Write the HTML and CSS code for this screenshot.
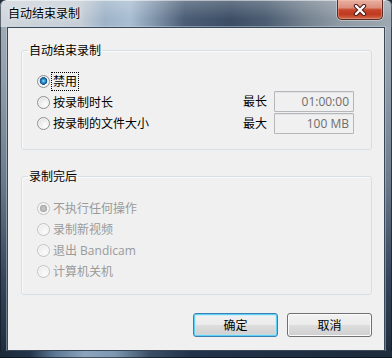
FILE: index.html
```html
<!DOCTYPE html>
<html lang="zh-CN">
<head>
<meta charset="utf-8">
<title>自动结束录制</title>
<link rel="stylesheet" href="styles.css">
</head>
<body>
<div class="window">
  <div class="titlebar">
    <span class="title">自动结束录制</span>
    <div class="close">
      <svg width="14" height="12" viewBox="0 0 14 12">
        <path d="M3 2 L11 10 M11 2 L3 10" stroke="#4a1c16" stroke-width="4.4" stroke-linecap="round" fill="none"/>
        <path d="M3 2 L11 10 M11 2 L3 10" stroke="#ffffff" stroke-width="2.4" stroke-linecap="round" fill="none"/>
      </svg>
    </div>
  </div>
  <div class="client">
    <fieldset class="group g1">
      <legend>自动结束录制</legend>
      <div class="row">
        <label class="opt"><span class="radio checked"></span><span class="focus">禁用</span></label>
      </div>
      <div class="row">
        <label class="opt"><span class="radio"></span><span>按录制时长</span></label>
        <div class="limit"><span class="limit-label">最长</span><span class="field">01:00:00</span></div>
      </div>
      <div class="row">
        <label class="opt"><span class="radio"></span><span>按录制的文件大小</span></label>
        <div class="limit low"><span class="limit-label">最大</span><span class="field">100 MB</span></div>
      </div>
    </fieldset>
    <fieldset class="group g2">
      <legend>录制完后</legend>
      <div class="row disabled">
        <label class="opt"><span class="radio checked"></span><span>不执行任何操作</span></label>
      </div>
      <div class="row disabled">
        <label class="opt"><span class="radio"></span><span>录制新视频</span></label>
      </div>
      <div class="row disabled">
        <label class="opt"><span class="radio"></span><span>退出 Bandicam</span></label>
      </div>
      <div class="row disabled">
        <label class="opt"><span class="radio"></span><span>计算机关机</span></label>
      </div>
    </fieldset>
    <div class="buttons">
      <button class="btn default">确定</button>
      <button class="btn">取消</button>
    </div>
  </div>
  <div class="frame-bottom"></div>
</div>
</body>
</html>
```

FILE: styles.css
```css
* { box-sizing: border-box; }

html, body {
  margin: 0;
  padding: 0;
  background: #1d2b3b;
}

body {
  font-family: "Open Sans", "Noto Sans CJK SC", sans-serif;
  font-size: 12px;
  line-height: 15px;
  color: #000;
}

.window {
  width: 392px;
  height: 358px;
  display: flex;
  flex-direction: column;
  border-radius: 6px 6px 0 0;
  background: linear-gradient(to bottom, #aab3bc 0, #929eaa 22%, #6c7b8c 50%, #34455a 78%, #1d2b3b 100%);
  box-shadow: inset 0 0 0 1px rgba(20, 30, 42, 0.75);
  overflow: hidden;
}

.titlebar {
  height: 27px;
  flex: none;
  display: flex;
  align-items: flex-start;
  padding-left: 8px;
  background:
    linear-gradient(to bottom, rgba(255,255,255,0.22) 0, rgba(255,255,255,0) 70%),
    linear-gradient(to right, #cfd6dc 0, #c6ced6 80px, #9fb4c9 105px, #a9bed2 130px, #7f93a9 155px, #4a5d75 185px, #3d4f66 230px, #4b5d72 265px, #73818f 305px, #8f9aa5 340px, #9ea8b1 392px);
  border-radius: 6px 6px 0 0;
  box-shadow: inset 0 1px 0 rgba(255,255,255,0.5), inset 1px 0 0 rgba(20,30,42,0.6), inset -1px 0 0 rgba(20,30,42,0.6);
}

.title {
  line-height: 26px;
  padding-top: 1px;
  text-shadow: 0 0 6px rgba(255,255,255,0.8), 0 0 2px rgba(255,255,255,0.6);
}

.close {
  margin-left: auto;
  margin-right: 9px;
  width: 46px;
  height: 20px;
  display: flex;
  align-items: center;
  justify-content: center;
  border: 1px solid #5c2a22;
  border-top: none;
  border-radius: 0 0 5px 5px;
  background: linear-gradient(to bottom, #e8b0a2 0, #dc8f7d 40%, #c6452a 52%, #c0391f 75%, #d06a48 100%);
  box-shadow: inset 0 0 0 1px rgba(255, 200, 180, 0.35), 0 0 0 1px rgba(255,255,255,0.35);
}

.client {
  margin: 0 7px;
  height: 324px;
  flex: none;
  border: 1px solid #3a4756;
  background: #f0f0f0;
  padding: 15px 12px 0 13px;
  box-shadow: 0 0 0 1px rgba(200, 215, 230, 0.45);
}

.group {
  margin: 0;
  border: 1px solid #d5dfe5;
  border-radius: 3px;
  padding: 13px 17px 15px 0;
  box-shadow: inset 1px 1px 0 #fafafa;
  min-width: 0;
}

.group legend {
  margin-left: 6px;
  padding: 0 1px;
  line-height: 15px;
}

.g2 {
  margin-top: 19px;
  padding-top: 14px;
  padding-bottom: 12px;
}

.row {
  height: 21px;
  display: flex;
  align-items: center;
  justify-content: space-between;
  padding-left: 15px;
}

.opt {
  display: flex;
  align-items: center;
}

.radio {
  width: 13px;
  height: 13px;
  margin-right: 3px;
  border-radius: 50%;
  border: 1px solid #8e8f90;
  background: radial-gradient(circle at 65% 70%, #fdfdfd 0, #efefef 40%, #d9d9d9 100%);
  box-shadow: inset 0 0 0 1px #f6f6f6;
  flex: none;
}

.radio.checked {
  background:
    radial-gradient(circle at 50% 45%, #8fe1ff 0, #3aa3dc 1.4px, #1b5d9c 3px, #174e86 3.6px, rgba(23,78,134,0) 4.1px),
    radial-gradient(circle at 65% 70%, #fdfdfd 0, #efefef 40%, #d9d9d9 100%);
}

.focus {
  outline: 1px dotted #000;
  outline-offset: 1px;
}

.limit {
  display: flex;
  align-items: center;
  margin-top: -3px;
}

.limit.low {
  margin-top: -1px;
}

.limit-label {
  margin-right: 7px;
}

.field {
  width: 80px;
  height: 21px;
  border: 1px solid #b4b6ba;
  border-radius: 1px;
  background: #f0f0f0;
  color: #6d6d6d;
  text-align: right;
  padding-right: 4px;
  line-height: 19px;
  box-shadow: inset 0 1px 0 #e2e3e5;
}

.row.disabled {
  color: #9a9a9a;
}

.row.disabled .radio {
  border-color: #c3c3c3;
  background: radial-gradient(circle at 65% 70%, #fbfbfb 0, #f1f1f1 50%, #e6e6e6 100%);
  box-shadow: inset 0 0 0 1px #f7f7f7;
}

.row.disabled .radio.checked {
  background:
    radial-gradient(circle at 50% 50%, #c9c9c9 0, #b6b6b6 2.4px, #a9a9a9 3.4px, rgba(169,169,169,0) 4px),
    radial-gradient(circle at 65% 70%, #fbfbfb 0, #f1f1f1 50%, #e6e6e6 100%);
}

.buttons {
  margin-top: 18px;
  display: flex;
  justify-content: flex-end;
  gap: 9px;
}

.btn {
  width: 85px;
  height: 24px;
  padding: 0;
  font: inherit;
  color: #000;
  border: 1px solid #707070;
  border-radius: 3px;
  background: linear-gradient(to bottom, #f2f2f2 0, #ebebeb 48%, #dddddd 52%, #cfcfcf 100%);
  box-shadow: inset 0 0 0 1px #fbfbfb;
}

.btn.default {
  border-color: #3c7fb1;
  box-shadow: inset 0 0 0 1px #5cd0f7, inset 0 0 0 2px rgba(180, 230, 250, 0.5);
}

.frame-bottom {
  flex: 1;
  margin-top: 0;
  background: linear-gradient(to right, #1c2a3a 0, #24354a 30px, #5d7894 55px, #8ca4bd 85px, #7d97b1 115px, #3a4f66 150px, #22324a 190px, #1d2b3b 100%);
  box-shadow: inset 0 -1px 0 rgba(0,0,0,0.5);
}
```
